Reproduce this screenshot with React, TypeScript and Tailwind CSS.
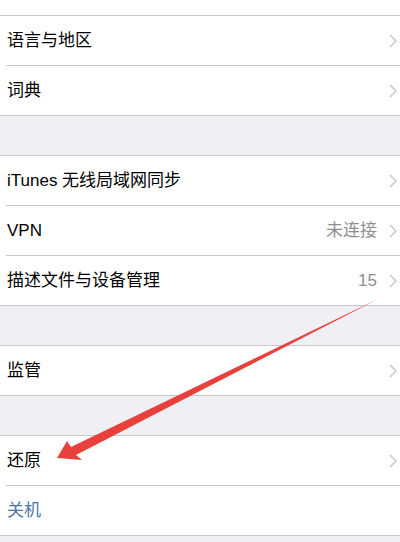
import React from 'react';

type Row = { label: string; value?: string; chevron?: boolean; blue?: boolean };

const font = { fontFamily: '"Liberation Sans", "Noto Sans CJK SC", sans-serif' };

const Cell = ({ row, last }: { row: Row; last: boolean }) => (
  <div className="bg-white">
    <div className="flex h-[49px] items-center pl-[7px] pr-[3px]">
      <span className={`text-[17px] ${row.blue ? 'text-[#4d74a8]' : 'text-black'}`}>{row.label}</span>
      <div className="ml-auto flex items-center">
        {row.value && <span className="mr-[12px] text-[17px] text-[#8e8e93]">{row.value}</span>}
        {row.chevron !== false && (
          <svg width="8" height="14" viewBox="0 0 8 14">
            <path d="M1 1l6 6-6 6" fill="none" stroke="#c4c4c9" strokeWidth="1.4" />
          </svg>
        )}
      </div>
    </div>
    <div className={`h-px bg-[#c8c7cc] ${last ? '' : 'ml-[6px]'}`} />
  </div>
);

const Group = ({ rows }: { rows: Row[] }) => (
  <div>
    {rows.map((r, i) => (
      <Cell key={r.label} row={r} last={i === rows.length - 1} />
    ))}
  </div>
);

const Gap = () => (
  <div className="bg-[#efeff4]">
    <div className="h-[39px]" />
    <div className="h-px bg-[#c8c7cc]" />
  </div>
);

export default function App() {
  return (
    <div className="relative h-[542px] w-[400px] overflow-hidden bg-[#efeff4]" style={font}>
      <div className="bg-white">
        <div className="h-[15px]" />
        <div className="h-px bg-[#c8c7cc]" />
      </div>
      <Group rows={[{ label: '语言与地区' }, { label: '词典' }]} />
      <Gap />
      <Group
        rows={[
          { label: 'iTunes 无线局域网同步' },
          { label: 'VPN', value: '未连接' },
          { label: '描述文件与设备管理', value: '15' },
        ]}
      />
      <Gap />
      <Group rows={[{ label: '监管' }]} />
      <Gap />
      <Group rows={[{ label: '还原' }, { label: '关机', chevron: false, blue: true }]} />

      {/* red annotation arrow */}
      <svg className="pointer-events-none absolute left-0 top-0" width="400" height="542">
        <polygon points="57,458 67,441 71,447 378,299 76,455 82,460" fill="#e8403a" />
      </svg>
    </div>
  );
}
